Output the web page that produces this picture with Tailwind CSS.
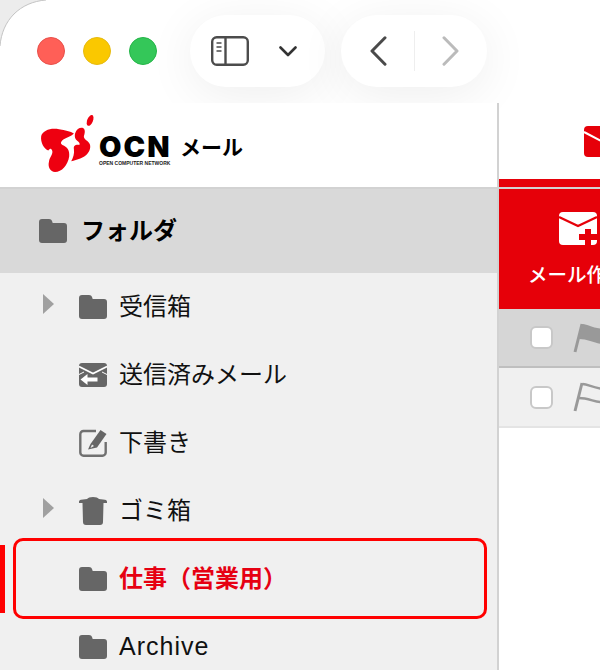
<!DOCTYPE html>
<html lang="ja">
    <head>
        <meta charset="utf-8" />
        <title>OCN メール</title>
        <script src="https://cdn.jsdelivr.net/npm/@tailwindcss/browser@4"></script>
    </head>
    <body class="bg-white">
        <div class="relative w-[600px] h-[670px] overflow-hidden bg-white font-['Noto_Sans_CJK_JP',sans-serif] text-[#111]">

            <!-- window corner -->
            <svg class="absolute left-0 top-0 z-20" width="50" height="50" viewBox="0 0 50 50">
                <path d="M0 0H46C20 2 2 20 0 46Z" fill="#ececec" />
                <path d="M46 0C20 2 2 20 0 46" fill="none" stroke="#c4c4c4" stroke-width="1" />
            </svg>

            <!-- toolbar -->
            <header class="relative z-10 h-[103px] pt-[15px] pl-[37px] flex items-start">
                <div class="flex gap-[18px] mt-[22px]">
                    <span class="w-[28px] h-[28px] rounded-full bg-[#ff5f57] border border-[#e8504a]"></span>
                    <span class="w-[28px] h-[28px] rounded-full bg-[#fac800] border border-[#e6ba10]"></span>
                    <span class="w-[28px] h-[28px] rounded-full bg-[#34c759] border border-[#24b548]"></span>
                </div>
                <div class="ml-[33px] w-[135px] h-[72px] rounded-full bg-white shadow-[0_8px_50px_rgba(0,0,0,0.07)] flex items-center pl-[21px]">
                    <svg width="38" height="30" viewBox="0 0 38 30" fill="none" stroke="#4c4c4c" stroke-width="2.4">
                        <rect x="1.2" y="1.2" width="35.6" height="27.6" rx="4.5" />
                        <path d="M14.5 1.2V28.8" />
                        <path d="M5.5 7h5M5.5 11h5M5.5 15h5" stroke-width="1.6" />
                    </svg>
                    <svg class="ml-[30px]" width="18" height="11" viewBox="0 0 18 11" fill="none" stroke="#333" stroke-width="2.6" stroke-linecap="round" stroke-linejoin="round">
                        <path d="M1.5 1.5L9 9L16.5 1.5" />
                    </svg>
                </div>
                <div class="ml-[16px] w-[146px] h-[72px] rounded-full bg-white shadow-[0_8px_50px_rgba(0,0,0,0.07)] flex items-center pl-[29px]">
                    <svg width="17" height="30" viewBox="0 0 17 30" fill="none" stroke="#4a4a4a" stroke-width="3" stroke-linecap="round" stroke-linejoin="round">
                        <path d="M15 1.8L2 15L15 28.2" />
                    </svg>
                    <span class="ml-[27px] w-[1px] h-[40px] bg-[#eeeeee]"></span>
                    <svg class="ml-[27px]" width="17" height="30" viewBox="0 0 17 30" fill="none" stroke="#bbbbbb" stroke-width="3" stroke-linecap="round" stroke-linejoin="round">
                        <path d="M2 1.8L15 15L2 28.2" />
                    </svg>
                </div>
            </header>

            <div class="flex h-[567px]">
                <!-- sidebar -->
                <aside class="relative w-[499px] shrink-0 border-r-2 border-[#d2d2d2] bg-[#f0f0f0]">
                    <div class="h-[86px] bg-white border-b-2 border-[#d2d2d2] relative z-20 flex items-start pl-[40px] pt-[11px]">
                        <svg class="shrink-0" width="56" height="59" viewBox="30 28 165 175">
                            <g fill="#ee0010">
                                <ellipse cx="178" cy="47" rx="8.5" ry="17" transform="rotate(22 178 47)" />
                                <path d="M33 93C38 76 62 68 86 73C104 76 120 79 130 86C122 95 106 98 96 106C90 112 90 116 96 120C110 125 118 136 116 154C112 180 94 200 74 200C60 200 52 186 56 170C58 156 68 148 66 138C64 130 60 128 54 136C42 132 30 112 33 93Z" />
                                <path d="M134 84C138 72 150 66 158 70C164 74 163 84 160 92C158 100 164 104 172 110C182 118 180 134 170 146C160 158 140 164 122 168C128 158 132 146 130 132C128 120 138 118 146 120C150 114 142 110 136 104C132 98 132 90 134 84Z" />
                            </g>
                        </svg>
                        <div class="ml-[3px] mt-[21px] w-[72px] shrink-0">
                            <div class="h-[24px] font-['Inter',sans-serif] font-black text-[29px] leading-[24px] tracking-[2px] text-black">OCN</div>
                            <div class="h-[6px] mt-[1px] font-['Liberation_Sans',sans-serif] font-bold text-[5px] leading-[6px] whitespace-nowrap text-[#222]">OPEN COMPUTER NETWORK</div>
                        </div>
                        <span class="ml-[9px] mt-[16px] text-[21px] leading-[32px] font-bold text-black whitespace-nowrap">メール</span>
                    </div>

                    <div class="h-[84px] bg-[#d9d9d9] flex items-center pl-[39px]">
                        <svg width="28" height="24" viewBox="0 0 28 24" fill="#666666"><path d="M3 0h7c1.6 0 2.6.9 3.1 2.3L13.7 4H25a3 3 0 0 1 3 3v14a3 3 0 0 1-3 3H3a3 3 0 0 1-3-3V3a3 3 0 0 1 3-3z" /></svg>
                        <span class="ml-[14px] mb-[4px] text-[24px] font-bold leading-[32px] text-black">フォルダ</span>
                    </div>

                    <ul class="pl-[43px]">
                        <li class="h-[68px] flex items-center">
                            <svg class="w-[11px] -mt-[6px]" width="11" height="20" viewBox="0 0 11 20" fill="#a0a0a0"><path d="M0 0L11 10L0 20Z" /></svg>
                            <svg class="ml-[25px]" width="28" height="24" viewBox="0 0 28 24" fill="#666666"><path d="M3 0h7c1.6 0 2.6.9 3.1 2.3L13.7 4H25a3 3 0 0 1 3 3v14a3 3 0 0 1-3 3H3a3 3 0 0 1-3-3V3a3 3 0 0 1 3-3z" /></svg>
                            <span class="ml-[12px] mb-[4px] text-[24px] leading-[32px]">受信箱</span>
                        </li>
                        <li class="h-[68px] flex items-center pl-[36px]">
                            <svg width="28" height="24" viewBox="0 0 28 24">
                                <path d="M3 0h22a3 3 0 0 1 3 3v18a3 3 0 0 1-3 3H3a3 3 0 0 1-3-3V3a3 3 0 0 1 3-3z" fill="#666666" />
                                <path d="M0 3.500L14 10.500L28 3.500" fill="none" stroke="#ffffff" stroke-width="1.6" />
                                <path d="M0 11.500L5 9M28 11.500L23 9" fill="none" stroke="#ffffff" stroke-width="1" />
                                <path d="M1.500 16.500L8.500 11V14.500H18.500V18.500H8.500V22Z" fill="#ffffff" />
                            </svg>
                            <span class="ml-[12px] mb-[4px] text-[24px] leading-[32px]">送信済みメール</span>
                        </li>
                        <li class="h-[68px] flex items-center pl-[36px]">
                            <svg width="28" height="28" viewBox="0 0 28 28" fill="none">
                                <path d="M17 2H4.500A3.200 3.200 0 0 0 1.300 5.200V23.500A3.200 3.200 0 0 0 4.500 26.700H23.500A3.200 3.200 0 0 0 26.700 23.500V13" stroke="#707070" stroke-width="2.4" />
                                <path d="M21.500 1L27.500 5L18 18.500L9 20.500L11.500 15Z" fill="#666666" />
                                <path d="M11.500 19L13 15.500L15 17Z" fill="#f0f0f0" />
                            </svg>
                            <span class="ml-[12px] mb-[4px] text-[24px] leading-[32px]">下書き</span>
                        </li>
                        <li class="h-[68px] flex items-center">
                            <svg class="w-[11px] -mt-[6px]" width="11" height="20" viewBox="0 0 11 20" fill="#a0a0a0"><path d="M0 0L11 10L0 20Z" /></svg>
                            <svg class="ml-[25px]" width="28" height="28" viewBox="0 0 28 28" fill="#666666">
                                <path d="M8 2C9 .7 11 0 14 0s5 .7 6 2l6 .8c1.300.2 2 1 2 2V6H0V4.800c0-1 .7-1.800 2-2z" />
                                <path d="M3.500 6h21L24 25a3 3 0 0 1-3 3H7a3 3 0 0 1-3-3z" />
                            </svg>
                            <span class="ml-[12px] mb-[4px] text-[24px] leading-[32px]">ゴミ箱</span>
                        </li>
                        <li class="h-[68px] flex items-center pl-[36px]">
                            <svg width="28" height="24" viewBox="0 0 28 24" fill="#666666"><path d="M3 0h7c1.6 0 2.6.9 3.1 2.3L13.7 4H25a3 3 0 0 1 3 3v14a3 3 0 0 1-3 3H3a3 3 0 0 1-3-3V3a3 3 0 0 1 3-3z" /></svg>
                            <span class="ml-[12px] mb-[4px] text-[24px] font-bold leading-[32px] text-[#e60012]">仕事（営業用）</span>
                        </li>
                        <li class="h-[68px] flex items-center pl-[36px]">
                            <svg width="28" height="24" viewBox="0 0 28 24" fill="#666666"><path d="M3 0h7c1.6 0 2.6.9 3.1 2.3L13.7 4H25a3 3 0 0 1 3 3v14a3 3 0 0 1-3 3H3a3 3 0 0 1-3-3V3a3 3 0 0 1 3-3z" /></svg>
                            <span class="ml-[12px] mb-[2px] font-['Liberation_Sans',sans-serif] text-[25px] tracking-[1px] leading-[32px]">Archive</span>
                        </li>
                    </ul>

                    <!-- focus ring on the selected folder -->
                    <div class="absolute left-0 top-[442px] w-[5px] h-[68px] bg-[#ff0000]"></div>
                    <div class="absolute left-[13px] top-[435px] w-[474px] h-[81px] rounded-[10px] border-[3px] border-[#ff0000]"></div>
                </aside>

                <!-- message pane -->
                <main class="flex-1 min-w-0 overflow-hidden bg-white">
                    <div class="h-[76px] pl-[85px] pt-[23px]">
                        <svg width="40" height="31" viewBox="0 0 40 31">
                            <rect width="40" height="31" rx="4" fill="#e60009" />
                            <path d="M0 6L17 15L34 24" fill="none" stroke="#ffffff" stroke-width="2" />
                        </svg>
                    </div>
                    <div class="h-[8px] bg-[#e60009]"></div>
                    <div class="h-[2px] bg-[#d2d2d2]"></div>
                    <div class="w-[158px] h-[120px] bg-[#e60009] pt-[23px] text-white">
                        <svg class="ml-[60px]" width="38" height="33" viewBox="0 0 38 33">
                            <path d="M4 0h30a4 4 0 0 1 4 4v25a4 4 0 0 1-4 4H4a4 4 0 0 1-4-4V4a4 4 0 0 1 4-4z" fill="#ffffff" />
                            <path d="M0 5L19 14L38 5" fill="none" stroke="#e60009" stroke-width="2.4" />
                            <path d="M20 22h6v-5h6v5h6v6h-6v5h-6v-5h-6z" fill="#e60009" />
                        </svg>
                        <div class="ml-[29px] mt-[15px] text-[19.500px] font-medium leading-[28px] whitespace-nowrap">メール作成</div>
                    </div>
                    <div class="h-[59px] bg-[#d6d6d6] border-b-2 border-[#bfbfbf] flex items-center pl-[31px]">
                        <span class="shrink-0 w-[23px] h-[23px] rounded-[6px] bg-white border-2 border-[#c8c8c8]"></span>
                        <svg class="ml-[20px] shrink-0" width="30" height="30" viewBox="0 0 30 30" fill="#999999">
                            <path d="M9 1L2 29" fill="none" stroke="#999999" stroke-width="3" />
                            <path d="M9.500 1C15 1.500 20 5 30 6V21C24 21 15 16 6 16Z" />
                        </svg>
                    </div>
                    <div class="h-[60px] bg-[#f0f0f0] border-b-2 border-[#e4e4e4] flex items-center pl-[31px]">
                        <span class="shrink-0 w-[23px] h-[23px] rounded-[6px] bg-white border-2 border-[#c8c8c8]"></span>
                        <svg class="ml-[20px] shrink-0" width="30" height="30" viewBox="0 0 30 30" fill="none" stroke="#999999" stroke-width="2.4">
                            <path d="M9 1L2 29" stroke-width="3" />
                            <path d="M9.500 2C15 2.500 20 5.500 30 7M28 20C22 20 15 16 6 16" />
                        </svg>
                    </div>
                </main>
            </div>
        </div>
    </body>
</html>
